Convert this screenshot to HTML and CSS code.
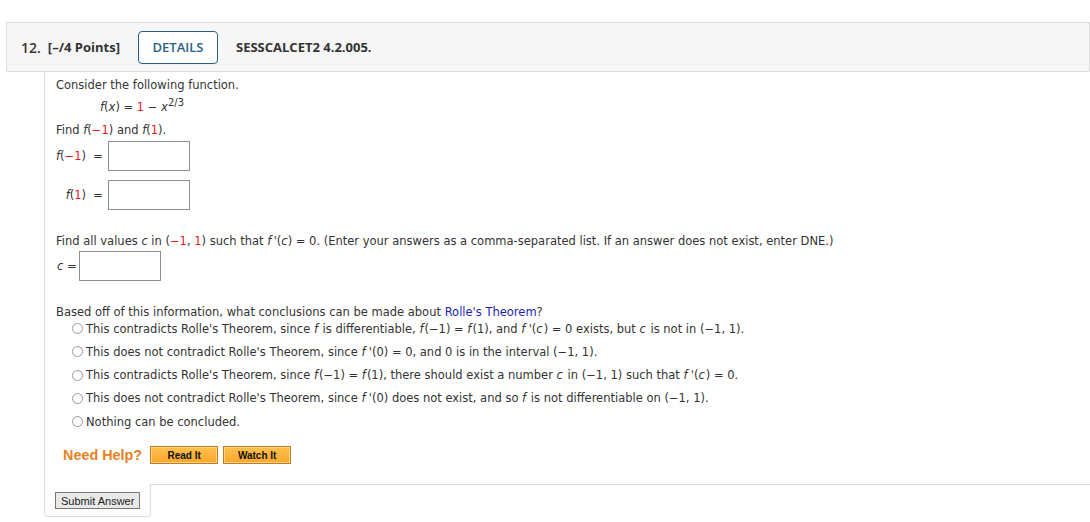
FILE: index.html
```html
<!DOCTYPE html>
<html lang="en">
<head>
  <meta charset="UTF-8" />
  <title>Question 12</title>
  <link rel="stylesheet" href="styles.css">
</head>
<body>
  <div class="question">
    <!-- Header -->
    <div class="q-header">
      <span class="q-num">12.</span>
      <span class="q-points">[&ndash;/4 Points]</span>
      <button class="details-btn">DETAILS</button>
      <span class="q-code">SESSCALCET2 4.2.005.</span>
    </div>

    <!-- Body -->
    <div class="q-body">
      <p class="line">Consider the following function.</p>
      <div class="formula"><i>f</i>(<i>x</i>) = <span class="red">1</span> &minus; <i>x</i><sup>2/3</sup></div>
      <p class="line find-vals">Find <i>f</i>(<span class="red">&minus;1</span>) and <i>f</i>(<span class="red">1</span>).</p>

      <div class="answer-grid">
        <label class="ans-label"><i>f</i>(<span class="red">&minus;1</span>) &nbsp;=</label>
        <input type="text" class="ans-box" />
        <label class="ans-label"><i>f</i>(<span class="red">1</span>) &nbsp;=</label>
        <input type="text" class="ans-box" />
      </div>

      <p class="line find-all">Find all values <i>c</i> in (<span class="red">&minus;1</span>, <span class="red">1</span>) such that <i>f</i>&thinsp;'(<i>c</i>) = 0. (Enter your answers as a comma-separated list. If an answer does not exist, enter DNE.)</p>
      <div class="c-row">
        <label class="c-label"><i>c</i> =</label>
        <input type="text" class="ans-box" />
      </div>

      <p class="line based">Based off of this information, what conclusions can be made about <a href="#" class="link">Rolle's Theorem</a>?</p>
      <ul class="options">
        <li class="option"><span class="radio"></span>This contradicts Rolle's Theorem, since <i>f</i> is differentiable, <i>f</i>(&minus;1) = <i>f</i>(1), and <i>f</i>&thinsp;'(<i>c</i>) = 0 exists, but <i>c</i> is not in (&minus;1, 1).</li>
        <li class="option"><span class="radio"></span>This does not contradict Rolle's Theorem, since <i>f</i>&thinsp;'(0) = 0, and 0 is in the interval (&minus;1, 1).</li>
        <li class="option"><span class="radio"></span>This contradicts Rolle's Theorem, since <i>f</i>(&minus;1) = <i>f</i>(1), there should exist a number <i>c</i> in (&minus;1, 1) such that <i>f</i>&thinsp;'(<i>c</i>) = 0.</li>
        <li class="option"><span class="radio"></span>This does not contradict Rolle's Theorem, since <i>f</i>&thinsp;'(0) does not exist, and so <i>f</i> is not differentiable on (&minus;1, 1).</li>
        <li class="option"><span class="radio"></span>Nothing can be concluded.</li>
      </ul>

      <div class="help">
        <span class="help-title">Need Help?</span>
        <button class="help-btn">Read It</button>
        <button class="help-btn">Watch It</button>
      </div>
    </div>

    <!-- Footer -->
    <div class="q-footer">
      <div class="submit-tab">
        <button class="submit-btn">Submit Answer</button>
      </div>
      <div class="footer-rest"></div>
    </div>
  </div>
</body>
</html>
```

FILE: styles.css
```css
:root {
  --text-color: #333;
  --border-light: #dcdcdc;
  --header-bg: #f6f6f6;
  --details-blue: #2a5e88;
  --red: #e8161b;
  --link-blue: #1d1db5;
  --help-orange: #e8821e;
}

body {
  margin: 0;
  padding: 0;
  background: #fff;
  color: var(--text-color);
  font-family: "DejaVu Sans", Verdana, sans-serif;
}

.question {
  margin: 22px 0 0 6px;
}

/* Header */
.q-header {
  display: flex;
  align-items: center;
  height: 48px;
  background-color: var(--header-bg);
  border: 1px solid var(--border-light);
  padding-left: 14px;
  font-family: "Open Sans", sans-serif;
  color: #333;
}

.q-num {
  font-size: 14px;
  font-weight: 600;
  margin-right: 7px;
}

.q-points {
  font-size: 13px;
  font-weight: 700;
  margin-right: 18px;
}

.details-btn {
  width: 80px;
  height: 33px;
  background: #fff;
  border: 1px solid var(--details-blue);
  border-radius: 4px;
  color: var(--details-blue);
  font-family: "Open Sans", sans-serif;
  font-size: 13px;
  font-weight: 600;
  padding: 0;
  margin-right: 18px;
}

.q-code {
  font-size: 13px;
  font-weight: 700;
}

/* Body */
.q-body {
  margin-left: 38px;
  border-left: 1px solid var(--border-light);
  padding: 5px 0 0 11px;
  font-size: 11.5px;
}

.line {
  margin: 0;
  line-height: 16px;
}

.red {
  color: var(--red);
}

.formula {
  margin: 6px 0 0 44px;
  line-height: 16px;
}

.formula sup {
  font-size: 10px;
  line-height: 0;
}

.find-vals {
  margin-top: 7px;
}

.answer-grid {
  display: grid;
  grid-template-columns: auto auto;
  justify-content: start;
  column-gap: 5px;
  row-gap: 9px;
  align-items: center;
  margin-top: 3px;
}

.ans-label {
  text-align: right;
  white-space: nowrap;
}

.ans-box {
  width: 82px;
  height: 30px;
  box-sizing: border-box;
  border: 1px solid #8e8e8e;
  margin: 0;
  padding: 2px 4px;
}

.find-all {
  margin-top: 23px;
}

.c-row {
  display: flex;
  align-items: center;
  gap: 2px;
  margin-top: 2px;
}

.c-label {
  padding-left: 1px;
}

.based {
  margin-top: 23px;
}

.link {
  color: var(--link-blue);
  text-decoration: none;
}

.options {
  list-style: none;
  margin: -3px 0 0;
  padding: 0 0 0 16px;
}

.option {
  display: flex;
  align-items: center;
  height: 23.25px;
  white-space: pre;
}

.option i {
  padding-right: 1px;
}

.radio {
  width: 9px;
  height: 9px;
  border: 1px solid #999;
  border-radius: 50%;
  margin-right: 3px;
  flex-shrink: 0;
}

/* Help */
.help {
  display: flex;
  align-items: center;
  gap: 5px;
  padding: 13px 0 20px 7px;
}

.help-title {
  font-family: "Liberation Sans", Arial, sans-serif;
  font-size: 14.4px;
  font-weight: 700;
  color: var(--help-orange);
  margin-right: 3px;
}

.help-btn {
  width: 68px;
  height: 18px;
  padding: 0;
  background: linear-gradient(#ffc24d, #f9a62d);
  border: 1px solid #c47a26;
  box-shadow: inset 0 0 0 1px #ffd67e;
  font-family: "Liberation Sans", Arial, sans-serif;
  font-size: 10px;
  font-weight: 700;
  color: #111;
}

/* Footer */
.q-footer {
  display: flex;
  margin-left: 38px;
}

.submit-tab {
  display: flex;
  align-items: flex-start;
  width: 107px;
  height: 33px;
  border-left: 1px solid var(--border-light);
  border-right: 1px solid var(--border-light);
  border-bottom: 1px solid var(--border-light);
  border-radius: 0 0 4px 4px;
  padding: 8px 0 0 10px;
  box-sizing: border-box;
}

.submit-btn {
  height: 17px;
  padding: 0 5px;
  background: #e9e9e9;
  border: 1px solid #777;
  font-family: "Liberation Sans", Arial, sans-serif;
  font-size: 11px;
  color: #222;
}

.footer-rest {
  flex: 1;
  border-top: 1px solid var(--border-light);
}
```
